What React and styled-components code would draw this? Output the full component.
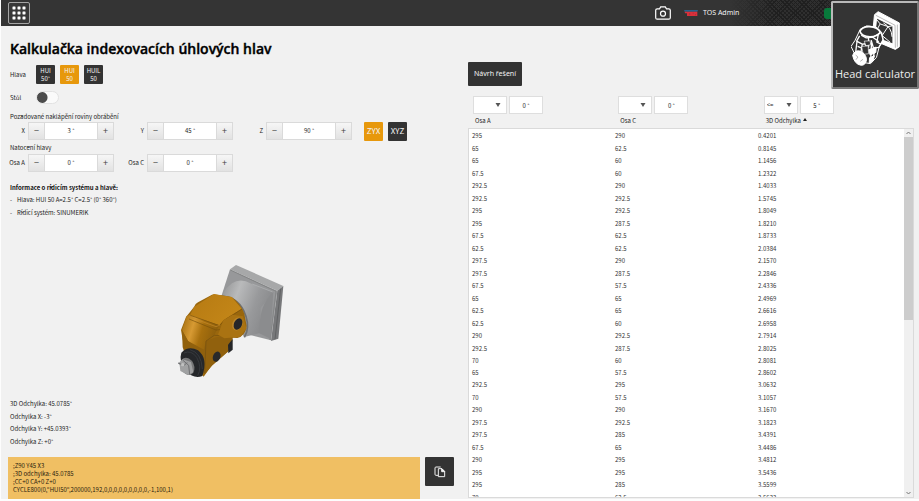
import React, { useState } from "react";
import styled, { createGlobalStyle, css } from "styled-components";

const GlobalStyle = createGlobalStyle`
  * { box-sizing: border-box; }
  html, body { margin: 0; padding: 0; background: #fdfdfd; }
  body, button, input, select {
    font-family: "Noto Sans CJK SC", "Noto Sans", sans-serif;
    font-size: 6px;
    line-height: 8px;
    color: #222;
  }
  button, input, select { margin: 0; padding: 0; border-radius: 0; }
  button { cursor: pointer; }
`;

const headingFont = css`
  font-family: "Noto Sans", "Open Sans", sans-serif;
`;

const Page = styled.div`
  position: relative;
  display: flex;
  flex-direction: column;
  height: 100vh;
  overflow: hidden;
  padding: 0 0 2px 1px;
`;

const TopBar = styled.header`
  display: flex;
  align-items: center;
  flex: none;
  height: 26px;
  padding: 0 84px 0 7px;
  background: #343434;
`;

const AppsButton = styled.button`
  display: grid;
  place-items: center;
  width: 22px;
  height: 22px;
  border: 1px solid #a5a5a5;
  border-radius: 2px;
  background: #383838;
`;

const UserArea = styled.div`
  display: flex;
  align-items: center;
  gap: 13px;
  height: 26px;
  margin-left: auto;
`;

const CameraButton = styled.button`
  display: grid;
  border: 0;
  background: none;
`;

const UserName = styled.span`
  ${headingFont}
  display: flex;
  align-items: center;
  gap: 5px;
  width: 151px;
  height: 26px;
  color: #f3f3f3;
  font-size: 7px;
  background:
    linear-gradient(90deg, #343434 30%, rgba(38, 38, 38, 0.3) 60%),
    repeating-linear-gradient(45deg, transparent 0 2px, #1c1c1c 2px 3px),
    repeating-linear-gradient(135deg, #333 0 2px, #1e1e1e 2px 3px);
`;

const StatusLight = styled.i`
  align-self: center;
  width: 11px;
  height: 11px;
  margin-left: auto;
  border-radius: 3px;
  background: #08793b;
`;

const Main = styled.main`
  display: grid;
  grid-template-columns: 1fr 1fr;
  flex: 1;
  min-height: 0;
  background: #f1f1f1;
`;

const InputPanel = styled.section`
  display: flex;
  flex-direction: column;
  min-height: 0;
  padding: 12px 6px 0 9px;
`;

const Title = styled.h1`
  margin: 0 0 6px;
  color: #000;
  font-family: "Open Sans", "Noto Sans", sans-serif;
  font-size: 14px;
  font-weight: 600;
  line-height: 21px;
  white-space: nowrap;
  -webkit-text-stroke: 0.4px #000;
`;

const OptionRow = styled.div`
  display: flex;
  align-items: center;
  gap: 5px;
  height: ${(p) => p.$height}px;
`;

const OptionLabel = styled.span`
  width: 21px;
`;

const ChoiceButton = styled.button`
  flex: none;
  width: 19px;
  height: 19px;
  border: 0;
  border-radius: 1px;
  background: ${(p) => (p.$active ? "#e7980c" : "#333")};
  color: #f4f4f4;
  font-size: ${(p) => (p.$large ? 8 : 6)}px;
`;

const Toggle = styled.input`
  appearance: none;
  width: 23px;
  height: 13px;
  margin: 0;
  border: 1px solid #e2e2e2;
  border-radius: 7px;
  background: radial-gradient(circle at 5px 50%, #4c4c4c 5px, transparent 6px) #fafafa;
  &:checked {
    background: radial-gradient(circle at 16px 50%, #4c4c4c 5px, transparent 6px) #e7980c;
  }
`;

const GroupLabel = styled.div`
  height: 8px;
  margin: ${(p) => p.$top}px 0 ${(p) => p.$bottom}px;
`;

const AxisRow = styled.div`
  display: flex;
  align-items: center;
  gap: 15px;
  height: 18px;
`;

const AxisField = styled.div`
  display: flex;
  align-items: center;
  gap: 3px;
`;

const AxisLabel = styled.label`
  display: flex;
  justify-content: flex-end;
  width: 15px;
  white-space: nowrap;
`;

const Stepper = styled.div`
  display: grid;
  grid-template-columns: 17px 52px 17px;
  width: 86px;
  height: 18px;
  border: 1px solid #dadada;
  border-width: 1px 0;
`;

const StepButton = styled.button`
  border: 1px solid #dadada;
  border-width: 0 1px;
  background: linear-gradient(#f6f6f6, #e2e2e2);
  color: #444;
  font-size: 9px;
`;

const StepInput = styled.input`
  min-width: 0;
  border: 0;
  background: #fff;
  text-align: center;
`;

const OrderButtons = styled.div`
  display: flex;
  gap: 5px;
  margin-left: -3px;
`;

const InfoTitle = styled.h2`
  margin: 12px 0 2px;
  color: #111;
  font-size: 6px;
  font-weight: 700;
  line-height: 8px;
`;

const TextLines = styled.ul`
  display: grid;
  grid-auto-rows: 12px 13px;
  align-items: center;
  margin: 0;
  padding: 0;
  list-style: none;
`;

const InfoItem = styled.li`
  display: flex;
  &::before { content: "-"; width: 7px; }
`;

const ModelView = styled.div`
  flex: 1;
  display: flex;
  align-items: center;
  justify-content: center;
  min-height: 0;
  padding-top: 24px;
`;

const ProgramRow = styled.div`
  display: flex;
  align-items: flex-start;
  gap: 5px;
  margin: 9px 0 0 -2px;
`;

const ProgramCode = styled.pre`
  flex: 1;
  height: 42px;
  margin: 0;
  padding: 5px;
  background: #f0bf63;
  color: #29200e;
  font: inherit;
`;

const CopyButton = styled.button`
  display: grid;
  place-items: center;
  width: 29px;
  height: 29px;
  border: 0;
  border-radius: 1px;
  background: #333;
`;

const ResultsPanel = styled.section`
  display: flex;
  flex-direction: column;
  min-height: 0;
  padding: 36px 5px 1px 8px;
`;

const SolveButton = styled.button`
  ${headingFont}
  width: 54px;
  height: 24px;
  margin-bottom: 10px;
  border: 0;
  border-radius: 1px;
  background: #333;
  color: #f4f4f4;
  font-size: 7px;
`;

const ResultsArea = styled.div`
  display: grid;
  grid-template-columns: 1fr 10px;
  grid-template-rows: auto 1fr;
  flex: 1;
  min-height: 0;
`;

const ResultsTable = styled.table`
  display: contents;
`;

const TableHead = styled.thead`
  display: block;
  grid-column: 1 / -1;
  padding: 0 5px;
`;

const HeadRow = styled.tr`
  display: grid;
  grid-template-columns: repeat(3, 1fr);
`;

const HeadCell = styled.th`
  padding: 0;
  font-weight: 400;
  text-align: left;
`;

const Filters = styled.div`
  display: flex;
  gap: 2px;
`;

const controlBox = css`
  height: 18px;
  border: 1px solid #dedede;
  background: #fff;
`;

const SelectWrap = styled.div`
  display: grid;
  align-items: center;
  width: 34px;
  & > * { grid-area: 1 / 1; }
  & > svg { justify-self: end; margin-right: 6px; pointer-events: none; }
`;

const FilterSelect = styled.select`
  ${controlBox}
  appearance: none;
  width: 34px;
  padding-left: 2px;
`;

const FilterInput = styled.input`
  ${controlBox}
  width: 34px;
  text-align: center;
`;

const SortButton = styled.button`
  display: flex;
  align-items: center;
  gap: 2px;
  height: 14px;
  padding-left: 2px;
  border: 0;
  background: none;
`;

const TableBody = styled.tbody`
  display: block;
  min-height: 0;
  overflow: hidden;
  padding: 1px 3px 0;
  border: 1px solid #dadada;
  border-right: 0;
  background: #fff;
`;

const BodyRow = styled.tr`
  display: grid;
  grid-template-columns: repeat(3, 1fr);
  align-items: center;
  height: 12px;
  &:nth-child(even) { height: 13px; }
  &:nth-child(20n) { height: 12px; }
`;

const BodyCell = styled.td`
  padding: 0;
  color: #333;
`;

const Scrollbar = styled.div`
  display: flex;
  flex-direction: column;
  border: 1px solid #dadada;
  border-left: 0;
  background: #f0f0f0;
`;

const ScrollStep = styled.button`
  display: grid;
  place-items: center;
  height: 8px;
  border: 0;
  background: #f0f0f0;
`;

const ScrollTrack = styled.div`
  flex: 1;
`;

const ScrollThumb = styled.div`
  height: 52%;
  background: #cdcdcd;
`;

const AppTile = styled.button`
  font-family: "Open Sans", "Noto Sans", sans-serif;
  position: absolute;
  top: 1px;
  right: 0;
  display: flex;
  flex-direction: column;
  align-items: center;
  justify-content: space-between;
  width: 88px;
  height: 88px;
  padding: 8px 0 5px;
  border: 2px solid #b9b9b9;
  border-right-color: #777;
  border-bottom-color: #777;
  border-radius: 2px;
  background: #343434;
  color: #ededed;
  font-size: 11px;
  font-weight: 500;
  line-height: 16px;
  white-space: nowrap;
`;

const DATA = [
  ["295", "290", "0.4201"], ["65", "62.5", "0.8145"], ["65", "60", "1.1456"],
  ["67.5", "60", "1.2322"], ["292.5", "290", "1.4033"], ["292.5", "292.5", "1.5745"],
  ["295", "292.5", "1.8049"], ["295", "287.5", "1.8210"], ["67.5", "62.5", "1.8733"],
  ["62.5", "62.5", "2.0384"], ["297.5", "290", "2.1570"], ["297.5", "287.5", "2.2846"],
  ["67.5", "57.5", "2.4336"], ["65", "65", "2.4969"], ["62.5", "65", "2.6616"],
  ["62.5", "60", "2.6958"], ["290", "292.5", "2.7914"], ["292.5", "287.5", "2.8025"],
  ["70", "60", "2.8081"], ["65", "57.5", "2.8602"], ["292.5", "295", "3.0632"],
  ["70", "57.5", "3.1057"], ["290", "290", "3.1670"], ["297.5", "292.5", "3.1823"],
  ["297.5", "285", "3.4391"], ["67.5", "65", "3.4486"], ["290", "295", "3.4812"],
  ["295", "295", "3.5436"], ["295", "285", "3.5599"], ["70", "62.5", "3.5633"],
];

const COLUMNS = [
  { name: "Osa A", op: "", value: "0 °" },
  { name: "Osa C", op: "", value: "0 °" },
  { name: "3D Odchylka", op: "<=", value: "5 °", sorted: true },
];

const PROGRAM = `;Z90 Y45 X3
;3D odchylka: 45.0785
;CC+0 CA+0 Z+0
CYCLE800(0,"HUI50",200000,192,0,0,0,0,0,0,0,0,0,-1,100,1)`;

function GridIcon() {
  return (
    <svg width="14" height="14" viewBox="0 0 14 14" fill="#fff" aria-hidden="true">
      {[0, 5, 10].map((y) => [0, 5, 10].map((x) => (
        <rect key={`${x}-${y}`} x={x + 0.5} y={y + 0.5} width="3" height="3" rx="0.4" />
      )))}
    </svg>
  );
}

function CameraIcon() {
  return (
    <svg width="16" height="14" viewBox="0 0 16 14" fill="none" stroke="#fff" strokeWidth="1.2" aria-hidden="true">
      <path d="M2.2 2.8h2.3L5.7.9h4.6l1.2 1.9h2.3q1.5 0 1.5 1.5v7.4q0 1.5-1.5 1.5H2.2q-1.5 0-1.5-1.5V4.3q0-1.5 1.5-1.5Z" />
      <circle cx="8" cy="7.7" r="2.5" />
    </svg>
  );
}

function TosLogo() {
  return (
    <svg width="14" height="6" viewBox="0 0 42 18" aria-hidden="true">
      <path d="M0 0h42l-2 5H2Z" fill="#27628c" />
      <path d="M2 5h38v13H9v-8H3Z" fill="#d8303a" />
      <path d="M17 9v6M26 10h3M33 14h3" fill="none" stroke="#8b3446" strokeWidth="2" />
    </svg>
  );
}

function CopyIcon() {
  return (
    <svg width="12" height="12" viewBox="0 0 36 36" fill="none" stroke="#f1f1f1" strokeWidth="3" aria-hidden="true">
      <path d="M12 28H6q-3 0-3-3V6q0-3 3-3h14" />
      <path d="M13 8h11l8 8v16H13Z" />
      <path d="M23 8v9h9Z" fill="#f1f1f1" />
    </svg>
  );
}

function MillingHead() {
  return (
    <svg width="125" height="130" viewBox="0 0 375 390" role="img" aria-label="HUI 50">
      <defs>
        <linearGradient id="cone" x1="0" y1="0" x2="1" y2="0.4">
          <stop offset="0" stopColor="#8d8e8f" />
          <stop offset="0.35" stopColor="#b9babb" />
          <stop offset="0.7" stopColor="#98999b" />
          <stop offset="1" stopColor="#88898b" />
        </linearGradient>
        <linearGradient id="gold" x1="0" y1="0" x2="1" y2="0.3">
          <stop offset="0" stopColor="#a06b0c" />
          <stop offset="0.35" stopColor="#d79a33" />
          <stop offset="0.6" stopColor="#a8700e" />
          <stop offset="1" stopColor="#8c5e0c" />
        </linearGradient>
        <linearGradient id="goldTop" x1="0" y1="0" x2="1" y2="0.5">
          <stop offset="0" stopColor="#b67a12" />
          <stop offset="1" stopColor="#c38618" />
        </linearGradient>
      </defs>
      <path d="M198 27 340 90 322 104 180 40Z" fill="#a7a8a9" />
      <path d="M180 40 322 104 303 253 232 235 155 118Z" fill="#97989a" />
      <path d="M322 104 340 90 325 248 303 255Z" fill="#77787a" />
      <path d="m332 98-17 152" stroke="#565759" strokeWidth="2" />
      <path d="m181 42 137 64-18 146" fill="none" stroke="#7a7b7c" strokeWidth="2" />
      <path d="M186 82q25-17 58 1l66 25-38 48-2 75-47 12-70-90q-5-43 33-71Z" fill="url(#cone)" />
      <path d="M310 108q-44 38-42 124l33 16Z" fill="#8b8c8e" />
      <path d="m247 84 61 24" stroke="#b4b5b6" strokeWidth="2" />
      <path d="M154 120q47 2 67 44 17 35 9 64l-7 16" fill="none" stroke="#6f7071" strokeWidth="5" />
      <path d="M72 153Q76 143 84 139L126 116q6-3 14 0l45 7q27 19 38 50l7 37q-4 30-28 36l-14-1-5 33-57 49-25 35-51-55-13-62-4-23 15-39Z" fill="#9a670d" />
      <path d="m72 153 60-39 53 9 30 35-54 34-13 16-88-30Z" fill="url(#goldTop)" />
      <path d="m60 177 88 31-16 31-24 16-6 35-47-34-19-33 14-43Z" fill="url(#gold)" />
      <path d="m61 178 87 31 16-17 52-33M57 189l81 33 20-2 8-21" fill="none" stroke="#79500a" strokeWidth="2" />
      <path d="m62 184 76 28 12-5" fill="none" stroke="#c48a2c" strokeWidth="2" />
      <path d="m36 222 18 33 48 26 6-27 31-10 49-7-4 41-58 51-22 26-52-41-14-40Z" fill="#91610d" />
      <path d="m108 255-4 96M108 255l25-17 57 3" fill="none" stroke="#74500f" strokeWidth="2" />
      <path d="m160 193 28-17 31 5 10 36-18 25-48 5-19-11Z" fill="#aa7312" />
      <ellipse cx="202" cy="204" rx="15" ry="20" transform="rotate(24 202 204)" fill="#bc872b" />
      <ellipse cx="204" cy="204" rx="12" ry="18" transform="rotate(24 204 204)" fill="#252629" />
      <ellipse cx="140" cy="302" rx="11" ry="16" transform="rotate(22 140 302)" fill="#292a2b" />
      <path d="m174 266 14-17v32l-13 11Z" fill="#252628" />
      <path d="M34 290q21-22 50-7 31 24 13 77-26 10-48-15-24-27-15-55Z" fill="#25272a" />
      <path d="M42 291q22-10 38 13 17 30 3 55M60 281q34 9 37 58" fill="none" stroke="#36393d" strokeWidth="3" />
      <ellipse cx="52" cy="331" rx="20" ry="27" transform="rotate(-25 52 331)" fill="#777879" />
      <path d="m25 322 13-12 25 8 7 31-15 8-24-12-2-17Z" fill="#a0a1a2" />
      <path d="m38 312 18 16 3 27M24 321l18 7 10-8" fill="none" stroke="#6d6e70" strokeWidth="3" />
      <circle cx="38" cy="326" r="5" fill="#c0c1c1" />
    </svg>
  );
}

function HeadOutline() {
  return (
    <svg width="49" height="55" viewBox="68 30 148 166" fill="none" stroke="#fff" strokeWidth="3" strokeLinejoin="round" aria-hidden="true">
      <path d="m139 41 11-9 64 34v72l-12 8-52-22-16-34Z" fill="#fff" />
      <path d="m147 53 46 23v51l-38-14-12-25Z" fill="#343434" stroke="none" />
      <path d="m143 43 58 30 1 68M208 71v67" stroke="#9a9a9a" strokeWidth="2" />
      <path d="m144 54 12 15 24 8 13-2M156 69l-10 18M166 66q25 14 26 42M180 77l-18 27 24 20M162 104l-14 14" />
      <path d="m96 85 19-10 28 3 18 17 4 23-12 21-8 31-18 19-36-6-23-46 12-18Z" fill="#343434" />
      <path d="M95 91q8-15 29-14 26 2 32 16-4 14-31 15-26-2-30-17Z" strokeWidth="5" />
      <path d="m99 103 15 8 20-2 25-14 6 22-13 23-16 2-7-24M134 109l18 14M151 98l-5 26 14 7M121 112v29M94 105l-9 16 17 9 28-4M102 130l-4 24M130 126l-3 60M86 122l-4 34M142 139l-9 40M88 137l11 4M113 130l-2 30" strokeWidth="4" />
      <path d="m121 147 23-8-1 16-17 8ZM124 171l15-6-5 16-11 7Z" fill="#fff" />
      <path d="m108 121 18-1 1 12-14 3ZM100 137l20-2 1 24-16 2Z" fill="#343434" strokeWidth="2" />
      <path d="M73 164q7-17 22-13 18 7 20 26-3 17-16 17-21-3-26-30Z" fill="#fff" />
      <path d="m82 163 7 6-6 8M96 182l8-6" stroke="#888" strokeWidth="2" />
    </svg>
  );
}

function AngleField({ id, label, initial }) {
  const [value, setValue] = useState(initial);
  return (
    <AxisField>
      <AxisLabel htmlFor={id}>{label}</AxisLabel>
      <Stepper>
        <StepButton aria-label={`${label} −`} onClick={() => setValue(value - 1)}>−</StepButton>
        <StepInput id={id} value={`${value} °`} onChange={(e) => setValue(parseInt(e.target.value, 10) || 0)} />
        <StepButton aria-label={`${label} +`} onClick={() => setValue(value + 1)}>+</StepButton>
      </Stepper>
    </AxisField>
  );
}

function ColumnHeader({ column }) {
  return (
    <HeadCell scope="col">
      <Filters>
        <SelectWrap>
          <FilterSelect aria-label={column.name} defaultValue={column.op}>
            <option value=""></option>
            <option value="<=">&lt;=</option>
            <option value=">=">&gt;=</option>
          </FilterSelect>
          <svg width="6" height="4" viewBox="0 0 6 4" aria-hidden="true"><path d="M.5 0h5L3 4Z" fill="#555" /></svg>
        </SelectWrap>
        <FilterInput aria-label={`${column.name} °`} defaultValue={column.value} />
      </Filters>
      <SortButton>
        {column.name}
        {column.sorted && <svg width="4" height="6" viewBox="0 0 4 6" aria-hidden="true"><path d="m0 3 2-3 2 3Z" fill="#222" /></svg>}
      </SortButton>
    </HeadCell>
  );
}

function ScrollArrow({ d }) {
  return (
    <svg width="5" height="4" viewBox="0 0 5 4" fill="none" stroke="#777" aria-hidden="true"><path d={d} /></svg>
  );
}

export default function App() {
  const [head, setHead] = useState(1);
  const [order, setOrder] = useState("ZYX");
  return (
    <>
      <GlobalStyle />
      <Page>
        <TopBar>
          <AppsButton aria-label="Menu"><GridIcon /></AppsButton>
          <UserArea>
            <CameraButton aria-label="Camera"><CameraIcon /></CameraButton>
            <UserName><TosLogo />TOS Admin<StatusLight /></UserName>
          </UserArea>
        </TopBar>
        <Main>
          <InputPanel>
            <Title>Kalkulačka indexovacích úhlových hlav</Title>
            <OptionRow $height={19}>
              <OptionLabel>Hlava</OptionLabel>
              {[["HUI", "50°"], ["HUI", "50"], ["HUIL", "50"]].map(([type, size], i) => (
                <ChoiceButton key={i} $active={head === i} onClick={() => setHead(i)}>{type}<br />{size}</ChoiceButton>
              ))}
            </OptionRow>
            <OptionRow $height={27}>
              <OptionLabel as="label" htmlFor="table">Stůl</OptionLabel>
              <Toggle id="table" type="checkbox" role="switch" />
            </OptionRow>
            <GroupLabel $top={2} $bottom={1}>Požadované naklápění roviny obrábění</GroupLabel>
            <AxisRow>
              <AngleField id="x" label="X" initial={3} />
              <AngleField id="y" label="Y" initial={45} />
              <AngleField id="z" label="Z" initial={90} />
              <OrderButtons>
                {["ZYX", "XYZ"].map((o) => (
                  <ChoiceButton key={o} $large $active={order === o} onClick={() => setOrder(o)}>{o}</ChoiceButton>
                ))}
              </OrderButtons>
            </AxisRow>
            <GroupLabel $top={4} $bottom={2}>Natočení hlavy</GroupLabel>
            <AxisRow>
              <AngleField id="a" label="Osa A" initial={0} />
              <AngleField id="c" label="Osa C" initial={0} />
            </AxisRow>
            <InfoTitle>Informace o řídicím systému a hlavě:</InfoTitle>
            <TextLines>
              <InfoItem>Hlava: HUI 50 A=2.5° C=2.5° (0° 360°)</InfoItem>
              <InfoItem>Řídicí systém: SINUMERIK</InfoItem>
            </TextLines>
            <ModelView><MillingHead /></ModelView>
            <TextLines>
              <li>3D Odchylka: 45.0785°</li>
              <li>Odchylka X: -3°</li>
              <li>Odchylka Y: +45.0393°</li>
              <li>Odchylka Z: +0°</li>
            </TextLines>
            <ProgramRow>
              <ProgramCode>{PROGRAM}</ProgramCode>
              <CopyButton aria-label="Kopírovat"><CopyIcon /></CopyButton>
            </ProgramRow>
          </InputPanel>
          <ResultsPanel>
            <SolveButton>Návrh řešení</SolveButton>
            <ResultsArea>
              <ResultsTable>
                <TableHead>
                  <HeadRow>{COLUMNS.map((c) => <ColumnHeader key={c.name} column={c} />)}</HeadRow>
                </TableHead>
                <TableBody>
                  {DATA.map((row) => (
                    <BodyRow key={row[2]}>{row.map((v, i) => <BodyCell key={i}>{v}</BodyCell>)}</BodyRow>
                  ))}
                </TableBody>
              </ResultsTable>
              <Scrollbar>
                <ScrollStep aria-label="Nahoru"><ScrollArrow d="m.5 3 2-2 2 2" /></ScrollStep>
                <ScrollTrack><ScrollThumb /></ScrollTrack>
                <ScrollStep aria-label="Dolů"><ScrollArrow d="m.5 1 2 2 2-2" /></ScrollStep>
              </Scrollbar>
            </ResultsArea>
          </ResultsPanel>
        </Main>
        <AppTile><HeadOutline />Head calculator</AppTile>
      </Page>
    </>
  );
}
